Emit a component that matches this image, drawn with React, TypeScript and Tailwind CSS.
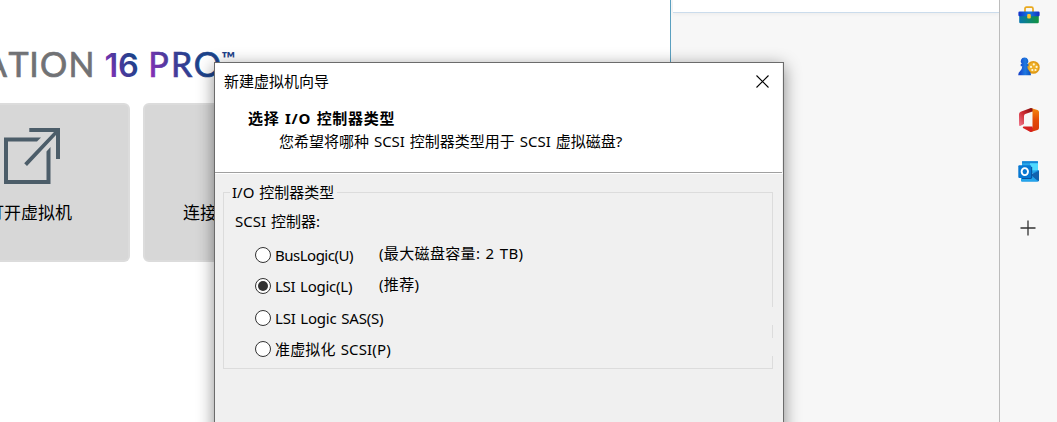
import type { ReactNode } from "react";

const UI = "font-['Noto_Sans','Noto_Sans_CJK_SC',sans-serif] [word-spacing:1px]";

function Wordmark() {
  return (
    <svg width="240" height="34" viewBox="0 48 240 34" className="block" fontFamily="Lato, sans-serif" fontSize="34" style={{ wordSpacing: 0 }}>
      <defs>
        <linearGradient id="six" gradientUnits="userSpaceOnUse" x1="104" y1="74" x2="136" y2="60">
          <stop offset="0" stopColor="#9a2cc0" />
          <stop offset="0.5" stopColor="#4a3a9c" />
          <stop offset="1" stopColor="#1d428a" />
        </linearGradient>
        <linearGradient id="pro" gradientUnits="userSpaceOnUse" x1="150" y1="76" x2="196" y2="56">
          <stop offset="0" stopColor="#8a2fb8" />
          <stop offset="0.5" stopColor="#443b99" />
          <stop offset="1" stopColor="#1d428a" />
        </linearGradient>
      </defs>
      <g fill="#717275" stroke="#717275" strokeWidth="0.7">
        <text x="-16 8.5 29.3 40 68.5" y="76.5">ATION</text>
      </g>
      <text x="104.5 118" y="76.5" fontFamily="Inter, sans-serif" fontSize="32.5" fontWeight="600" fill="url(#six)">16</text>
      <g fill="url(#pro)" stroke="url(#pro)" strokeWidth="0.7">
        <text x="148.3 171 193.8" y="76.5">PRO</text>
      </g>
      <text x="221.5" y="65" fontSize="18" fontWeight="700" fill="#1d428a" textLength="14" lengthAdjust="spacingAndGlyphs">™</text>
    </svg>
  );
}

function OpenIcon() {
  return (
    <svg width="58" height="58" viewBox="3 127 58 58" className="block" fill="#4c5d69">
      <path d="M4 137.5H41L37 141.5H8V180H46.5V151.5L50.5 147V184H4Z" />
      <path d="M29.3 128H60V159H56V135L27 166L24.2 163.3L54 132H29.3Z" />
    </svg>
  );
}

function Toolbox() {
  return (
    <svg width="22" height="18" viewBox="0 0 22 18" className="block">
      <defs>
        <linearGradient id="tb" x1="0" x2="1"><stop stopColor="#0878ae" /><stop offset="1" stopColor="#139440" /></linearGradient>
        <linearGradient id="tl" x1="0" x2="1"><stop stopColor="#102fcb" /><stop offset="0.5" stopColor="#137edf" /><stop offset="1" stopColor="#132dc0" /></linearGradient>
      </defs>
      <path d="M7 7V2.8Q7 1.2 8.5 1.2H13.5Q15 1.2 15 2.8V7" fill="none" stroke="#e9a91e" strokeWidth="1.7" />
      <rect x="1.2" y="8" width="19.6" height="9.2" rx="1.2" fill="url(#tb)" />
      <rect x="0.4" y="5.5" width="21.2" height="4.8" rx="1.2" fill="url(#tl)" />
      <rect x="9.2" y="8" width="3.6" height="4.4" rx="1" fill="#ffc52c" />
    </svg>
  );
}

function Games() {
  return (
    <svg width="22" height="19" viewBox="0 0 22 19" className="block">
      <defs>
        <linearGradient id="pw" x1="0" x2="1"><stop stopColor="#123bc7" /><stop offset="0.55" stopColor="#2079e0" /><stop offset="1" stopColor="#0a4cba" /></linearGradient>
      </defs>
      <circle cx="15.3" cy="10.4" r="6.4" fill="#e09a17" />
      <circle cx="15.3" cy="10.4" r="4.9" fill="#efb02a" />
      <path d="M6.5 0.5A3.7 3.7 0 0 1 9.3 6.8L10.4 7.3V9.2H9.2Q9.4 12 11.2 14Q13 15.5 13 18.3H0.2Q0.2 15.5 2.2 14Q4.2 12 4.2 9.2H2.7V7.3L3.8 6.8A3.7 3.7 0 0 1 6.5 0.5Z" fill="url(#pw)" />
      <g fill="#fff6d8"><circle cx="15.8" cy="7.4" r="1.1" /><circle cx="13" cy="9.9" r="1.1" /><circle cx="18.6" cy="9.9" r="1.1" /><circle cx="14.3" cy="13" r="1.1" /><circle cx="17.5" cy="13" r="1.1" /></g>
    </svg>
  );
}

function Office() {
  return (
    <svg width="22" height="26" viewBox="0 0 22 26" className="block">
      <defs>
        <linearGradient id="of" x1="0" y1="0" x2="0" y2="1"><stop stopColor="#f58a10" /><stop offset="0.5" stopColor="#e34b08" /><stop offset="1" stopColor="#d93609" /></linearGradient>
        <linearGradient id="ol" x1="1" y1="0" x2="0" y2="1"><stop stopColor="#7e0b0d" /><stop offset="0.5" stopColor="#ce2b32" /><stop offset="1" stopColor="#f07b91" /></linearGradient>
      </defs>
      <path d="M12.8 1L19.5 3Q21 3.5 21 5V21Q21 22.5 19.5 23L12.8 25L9 22.5L14.5 20.5V5Z" fill="url(#of)" />
      <path d="M12.8 1L2.7 4.8Q1 5.5 1 7.3V17.4Q1 19.5 2.6 18.7L6 17V9Q6 7.4 7.3 6.9L14.5 4.6V1.5Z" fill="url(#ol)" />
      <path d="M5.5 19.5H14.5V24.6L12.5 25L5 21.1Q4.2 20.2 5.5 19.5Z" fill="#d52021" />
    </svg>
  );
}

function Outlook() {
  return (
    <svg width="22" height="21" viewBox="0 0 22 21" className="block">
      <rect x="4" y="0.3" width="16" height="12" rx="1" fill="#28a8ea" />
      <rect x="4" y="0.3" width="16" height="2" fill="#1784d5" />
      <rect x="12" y="2.3" width="8" height="7" fill="#50d9ff" />
      <path d="M20 9L21 9.5V19.5Q21 20.4 20 20.4H4Q3 20.4 3 19.4V10L12 14Z" fill="#198bdd" />
      <path d="M21 9.7L11 14.7L21 20Z" fill="#1262ad" />
      <path d="M3 17L13 13.8L20 20.4H4Q3 20.4 3 19.4Z" fill="#25a5eb" />
      <path d="M13 6H14.2V16.2Q14.2 18 12.5 18H4V16Z" fill="#0b519c" />
      <rect x="0.3" y="4.2" width="12.9" height="12.8" rx="1" fill="#0878d2" />
      <ellipse cx="6.8" cy="10.6" rx="3.2" ry="3.5" fill="none" stroke="#fff" strokeWidth="1.9" />
    </svg>
  );
}

function Radio({ checked, label, note, className }: { checked?: boolean; label: ReactNode; note?: ReactNode; className: string }) {
  return (
    <div className={`flex h-5 items-center ${className}`}>
      <span className="flex size-4 shrink-0 items-center justify-center rounded-full border border-[#333] bg-white">
        {checked && <span className="size-2.5 rounded-full bg-[#333]" />}
      </span>
      <span className="-mt-px ml-1 w-26">{label}</span>
      {note && <span className="-mt-1 tracking-[0.35px]">{note}</span>}
    </div>
  );
}

export default function App() {
  return (
    <div className={`relative flex h-[422px] w-[1057px] overflow-hidden bg-[#f7f7f7] text-[15px] leading-5 whitespace-nowrap text-black ${UI}`}>
      <main className="h-full w-[671px] shrink-0 overflow-hidden border-r border-[#5ba0c0] bg-white pt-12">
        <Wordmark />
        <div className="mt-[21px] flex gap-[13px]">
          <section className="flex h-[159px] w-[130px] shrink-0 flex-col rounded-r-md border-2 border-l-0 border-[#dcdcdc] bg-[#d7d7d7] pt-[22px]">
            <div className="pl-[3px]"><OpenIcon /></div>
            <div className="-ml-[13px] mt-4 text-[17px] leading-6">打开虚拟机</div>
          </section>
          <section className="h-[159px] w-[160px] rounded-md border-2 border-[#dcdcdc] bg-[#d7d7d7] pt-24 pl-[38px] text-[17px] leading-6">
            连接
          </section>
        </div>
      </main>
      <section className="flex-1 pl-0.5">
        <div className="h-[13px] border-b border-[#cbdcec] bg-white shadow-[0_1px_4px_rgba(0,0,0,0.05)]" />
      </section>
      <aside className="flex w-[58px] flex-col items-center border-l border-[#bcbcbc] bg-[#f7f7f7] pt-1.5 pl-px">
        <Toolbox />
        <div className="mt-[33px]"><Games /></div>
        <div className="mt-[31px]"><Office /></div>
        <div className="mt-7"><Outlook /></div>
        <svg width="16" height="16" viewBox="0 0 16 16" className="mt-[38px] mr-0.5" stroke="#333" strokeWidth="1.3"><path d="M8 0.5V15.5M0.5 8H15.5" /></svg>
      </aside>

      <div className="absolute top-[62px] left-[214px] flex h-[380px] w-[570px] flex-col border border-[#6b6b6b] bg-[#f0f0f0] shadow-[0_4px_16px_rgba(0,0,0,0.45)]">
        <header className="mr-px h-[110px] shrink-0 border-b border-[#a0a0a0] bg-white pt-2">
          <div className="flex items-center justify-between pr-[13px] pl-[9px]">
            <span>新建虚拟机向导</span>
            <svg width="13" height="13" viewBox="0 0 13 13" stroke="#000" strokeWidth="1.1"><path d="M0.5 0.5L12.5 12.5M12.5 0.5L0.5 12.5" /></svg>
          </div>
          <div className="mt-[17px] pl-[33px] font-bold tracking-[0.7px]">选择 I/O 控制器类型</div>
          <div className="mt-[3px] pl-16">您希望将哪种 SCSI 控制器类型用于 SCSI 虚拟磁盘?</div>
        </header>
        <div className="h-px shrink-0 bg-white" />
        <div className="mt-2 ml-2 flex w-[550px] flex-col">
          <div className="flex h-5">
            <div className="mt-2.5 w-[7px] border-t border-l border-[#dcdcdc]" />
            <div className="ml-0.5 w-[105px]">I/O 控制器类型</div>
            <div className="mt-2.5 flex-1 border-t border-r border-[#dcdcdc]" />
          </div>
          <div className="flex h-[167px]">
            <div className="flex-1 border-b border-l border-[#dcdcdc] pt-[9px] pl-[11px]">
              <div>SCSI 控制器:</div>
              <div className="pl-5">
                <Radio className="mt-3.5" label={<span className="tracking-[-0.5px]">BusLogic(U)</span>} note="(最大磁盘容量: 2 TB)" />
                <Radio className="mt-[11px]" checked label={<span className="tracking-[-0.25px]">LSI Logic(L)</span>} note="(推荐)" />
                <Radio className="mt-3" label={<span className="tracking-[-0.2px]">LSI Logic SAS(S)</span>} />
                <Radio className="mt-[11px]" label={<span className="tracking-[0.15px]">准虚拟化 SCSI(P)</span>} />
              </div>
            </div>
            <div className="flex w-px flex-col justify-between">
              <div className="h-[105px]  bg-[#dcdcdc]" />
              <div className="h-[13px] bg-[#dcdcdc]" />
              <div className="h-[13px] bg-[#dcdcdc]" />
            </div>
          </div>
        </div>
      </div>
    </div>
  );
}
